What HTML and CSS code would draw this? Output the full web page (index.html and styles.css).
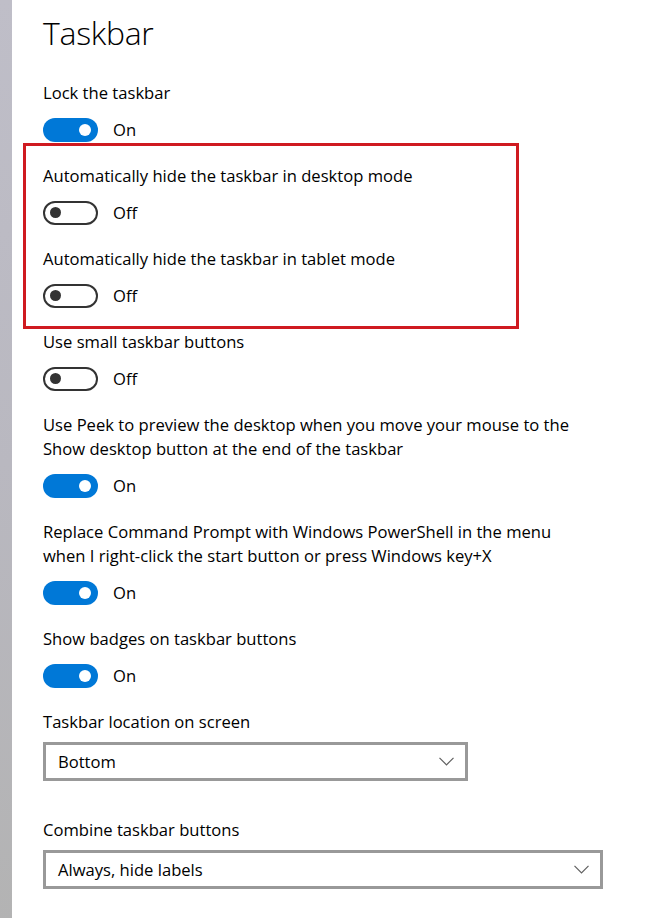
FILE: index.html
```html
<!DOCTYPE html>
<html>
<head>
<meta charset="utf-8">
<link rel="stylesheet" href="styles.css">
</head>
<body>
<div class="page">
  <div class="strip"></div>
  <main class="content">
    <h1 class="title">Taskbar</h1>

    <div class="setting">
      <div class="label">Lock the taskbar</div>
      <div class="toggle-row"><span class="toggle on"><span class="knob"></span></span><span class="state">On</span></div>
    </div>

    <div class="group">
      <div class="setting">
        <div class="label">Automatically hide the taskbar in desktop mode</div>
        <div class="toggle-row"><span class="toggle off"><span class="knob"></span></span><span class="state">Off</span></div>
      </div>
      <div class="setting">
        <div class="label">Automatically hide the taskbar in tablet mode</div>
        <div class="toggle-row"><span class="toggle off"><span class="knob"></span></span><span class="state">Off</span></div>
      </div>
      <div class="highlight"></div>
    </div>

    <div class="setting">
      <div class="label">Use small taskbar buttons</div>
      <div class="toggle-row"><span class="toggle off"><span class="knob"></span></span><span class="state">Off</span></div>
    </div>

    <div class="setting">
      <div class="label">Use Peek to preview the desktop when you move your mouse to the<br>Show desktop button at the end of the taskbar</div>
      <div class="toggle-row"><span class="toggle on"><span class="knob"></span></span><span class="state">On</span></div>
    </div>

    <div class="setting">
      <div class="label">Replace Command Prompt with Windows PowerShell in the menu<br>when I right-click the start button or press Windows key+X</div>
      <div class="toggle-row"><span class="toggle on"><span class="knob"></span></span><span class="state">On</span></div>
    </div>

    <div class="setting">
      <div class="label">Show badges on taskbar buttons</div>
      <div class="toggle-row"><span class="toggle on"><span class="knob"></span></span><span class="state">On</span></div>
    </div>

    <div class="setting select-setting">
      <div class="label">Taskbar location on screen</div>
      <div class="select narrow">
        <span class="select-text">Bottom</span>
        <svg class="chevron" width="15" height="9" viewBox="0 0 15 9"><path d="M0.5 0.8 L7.5 7.8 L14.5 0.8" fill="none" stroke="#606060" stroke-width="1.2"/></svg>
      </div>
    </div>

    <div class="setting select-setting">
      <div class="label">Combine taskbar buttons</div>
      <div class="select wide">
        <span class="select-text">Always, hide labels</span>
        <svg class="chevron" width="15" height="9" viewBox="0 0 15 9"><path d="M0.5 0.8 L7.5 7.8 L14.5 0.8" fill="none" stroke="#606060" stroke-width="1.2"/></svg>
      </div>
    </div>
  </main>
</div>
</body>
</html>
```

FILE: styles.css
```css
* { box-sizing: border-box; }
html, body { margin: 0; padding: 0; background: #fff; }
body {
  font-family: "Open Sans", "Noto Sans", sans-serif;
  color: #000;
}
.page {
  display: flex;
  min-height: 918px;
}
.strip {
  width: 12px;
  flex: none;
  background: linear-gradient(to bottom, #bfbec8 0%, #b9b8c0 50%, #b3b3b3 100%);
}
.content {
  padding-left: 31px;
  flex: 1;
}
.title {
  font-weight: 300;
  font-size: 32px;
  line-height: 44px;
  margin: 11px 0 26px;
  letter-spacing: -0.3px;
}
.setting {
  margin-bottom: 22px;
}
.label {
  font-size: 16.6px;
  line-height: 24px;
  margin-bottom: 12px;
}
.toggle-row {
  display: flex;
  align-items: center;
  height: 25px;
}
.toggle {
  width: 55px;
  height: 24px;
  border-radius: 12px;
  display: flex;
  align-items: center;
  flex: none;
}
.toggle.on {
  background: #0078d7;
  justify-content: flex-end;
  padding-right: 7px;
}
.toggle.on .knob {
  width: 12px;
  height: 12px;
  border-radius: 50%;
  background: #fff;
}
.toggle.off {
  border: 2.5px solid #333;
  padding-left: 5px;
}
.toggle.off .knob {
  width: 11px;
  height: 11px;
  border-radius: 50%;
  background: #333;
}
.state {
  font-size: 16.6px;
  margin-left: 15px;
}
.group {
  position: relative;
}
.highlight {
  position: absolute;
  left: -20px;
  top: -21px;
  width: 496px;
  height: 186px;
  border: 3px solid #cf1a20;
  pointer-events: none;
}
.select-setting .label {
  margin-bottom: 8px;
}
.select-setting {
  margin-bottom: 37px;
}
.select {
  height: 39px;
  border: 3px solid #999;
  display: flex;
  align-items: center;
  justify-content: space-between;
  padding: 0 11px 0 12px;
}
.select.narrow { width: 425px; }
.select.wide { width: 560px; }
.select-text {
  font-size: 16.6px;
}
.chevron { display: block; }
```
